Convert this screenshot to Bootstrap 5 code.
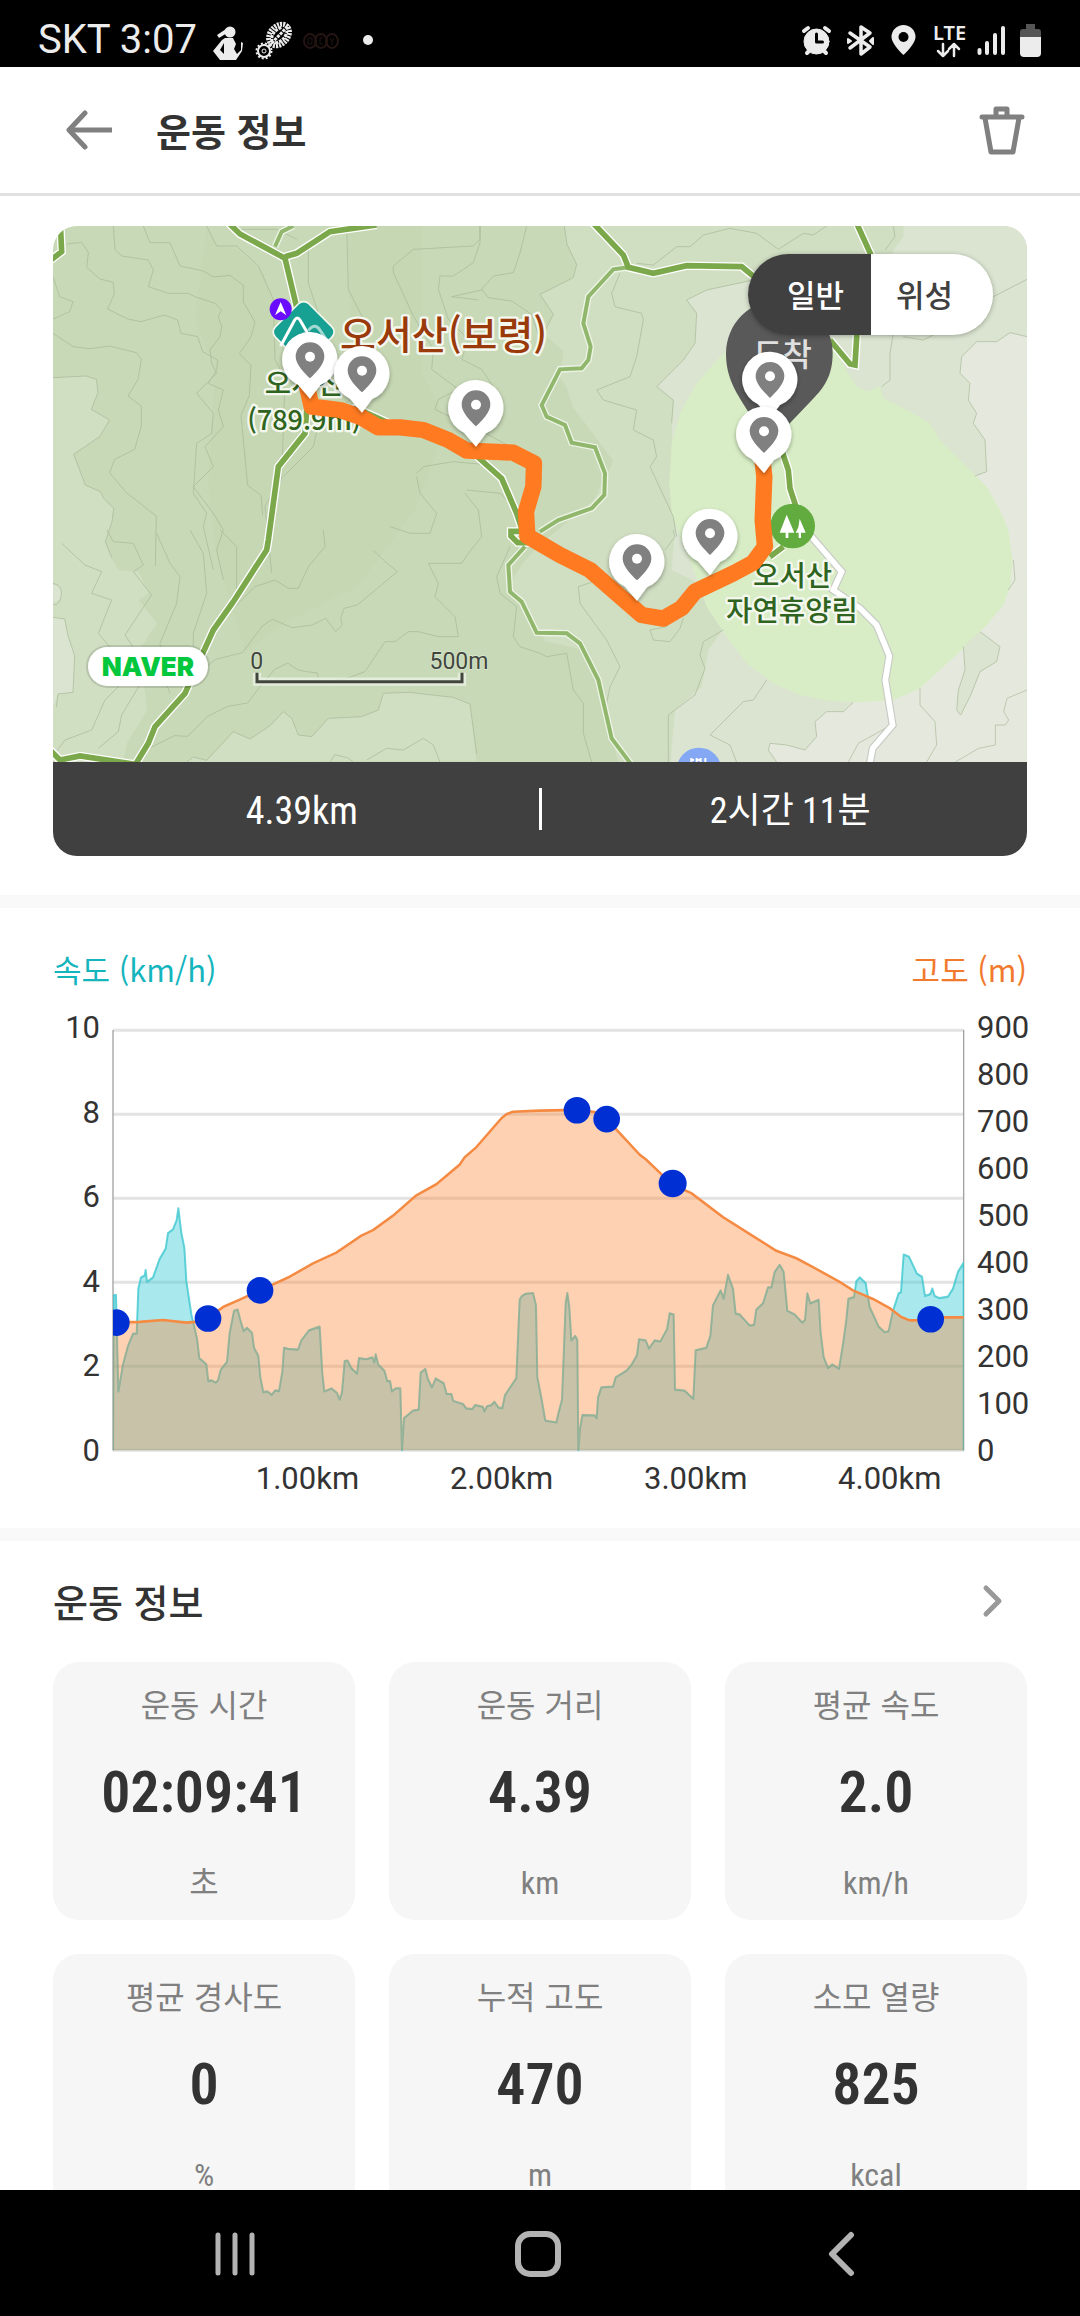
<!DOCTYPE html>
<html lang="ko">
<head>
<meta charset="utf-8">
<meta name="viewport" content="width=device-width, initial-scale=1">
<title>운동 정보</title>
<link href="https://cdn.jsdelivr.net/npm/bootstrap@5.3.0/dist/css/bootstrap.min.css" rel="stylesheet">
<style>
  :root { --side: 53px; --ink: #333; --soft: #808080; --dark: #404040; }
  body { font-family: "Noto Sans CJK KR", sans-serif; color: var(--ink); }
  svg { display: block; }
  .status { height: 67px; padding: 12px 38px 0 38px; font: 40px/56px Roboto, sans-serif; color: #ececec; }
  .notices { margin-left: 13px; }
  .appbar { height: 129px; padding: 0 55px 0 65px; border-bottom: 3px solid #e0e0e0; }
  .appbar h1 { font-size: 38px; line-height: 56px; font-weight: 700; margin-left: 43px; }
  .iconbtn { padding: 0; border: 0; line-height: 1; background: none; }
  .page { min-height: 0; overflow-y: auto; scrollbar-width: none; }
  .page::-webkit-scrollbar { display: none; }
  .mapcard { margin: 30px var(--side) 39px; border-radius: 24px; overflow: hidden; }
  .mapcard svg, .plot svg { width: 100%; height: auto; }
  .maptoggle { top: 28px; right: 34px; border-radius: 41px; box-shadow: 0 1px 5px rgba(0,0,0,.3); }
  .maptoggle .btn { width: 123px; height: 81px; border: 0; border-radius: 41px; background: #fff; color: var(--dark);
    font-size: 31px; line-height: 80px; font-weight: 500; padding: 0 14px 0 0; }
  .maptoggle .btn:first-of-type { padding: 0 0 0 12px; }
  .maptoggle .btn-check:checked + .btn { background: var(--dark); color: #fff; }
  .naver { left: 35px; bottom: 76px; width: 120px; height: 39px; border-radius: 20px; background: #fff; color: #03c73c;
    font: 900 26px/39px Inter, sans-serif; box-shadow: 0 0 0 2px rgba(0,0,0,.12); }
  .summary { height: 94px; background: var(--dark); color: #fff; font-size: 38px; line-height: 52px; }
  .summary .half { padding: 3px 0 0 12px; }
  .summary .hours { font-size: 36px; }
  .summary .rule { width: 3px; height: 42px; background: #fff; }
  .narrow { font-family: "Roboto Condensed", "Liberation Sans Narrow", "Noto Sans CJK KR", sans-serif; }
  .divide { height: 13px; background: #f9f9f9; }
  .chart { padding: 37px var(--side) 29px; }
  .legend2 { font-size: 31px; line-height: 48px; margin-bottom: 37px; }
  .cyan { color: #14b5bd; }
  .orange { color: #f27a2e; }
  .axes { font: 31px/40px Roboto, sans-serif; }
  .yaxis { margin: -22px 0 -20px; }
  .yl { width: 47px; margin-right: 13px; }
  .yr { width: 50px; margin-left: 13px; }
  .xaxis { margin: 8px 70px 0 60px; padding-left: 10%; }
  .xaxis span { width: 26%; flex-shrink: 0; }
  .info { padding: 32px var(--side) 34px; }
  .info h2 { font-size: 38px; line-height: 56px; font-weight: 500; }
  .info .iconbtn { margin-right: 24px; }
  .tiles { --bs-gutter-x: 34px; --bs-gutter-y: 34px; margin-top: -1px; }
  .tile { border-radius: 26px; background: #f6f6f6; padding: 17px 0 13px; text-align: center; }
  .tile dt, .tile .unit { font-size: 32px; line-height: 48px; font-weight: 400; color: var(--soft); }
  .tile .figure2 { font-size: 58px; line-height: 72px; font-weight: 600; margin: 29px 0 31px; }
  .softkeys { height: 126px; padding: 1px 88px 0 84px; }
</style>
</head>
<body class="vh-100 d-flex flex-column overflow-hidden bg-white">

<div class="status bg-black d-flex align-items-start flex-shrink-0">
  <span>SKT 3:07</span>
  <svg class="notices mt-2" width="176" height="44" viewBox="0 0 176 44">
    <g fill="#ececec" transform="translate(3 5)">
      <circle cx="17" cy="7" r="5.500"/>
      <path d="M13 4 4 10l2 3 8-5zM12 13h8l3 6-2 5 3 5 4-4 0-8 2 1-1 8-6 9H7L0 26l9-11zM7 25l4 4V18z" fill-rule="evenodd"/>
    </g>
    <g fill="none" stroke="#ececec">
      <ellipse cx="69" cy="15" rx="9" ry="12" transform="rotate(42 69 15)" stroke-width="5" stroke-dasharray="2 1"/>
      <path d="M59 26 79 5M62 22q-2-10 10-15m-7 16q10-2 12-12" stroke-width="3" stroke-dasharray="3 1"/>
      <circle cx="54" cy="31" r="6" stroke-width="2"/>
      <circle cx="54" cy="31" r="7.500" stroke-width="2" stroke-dasharray="2 2"/>
      <circle cx="54" cy="31" r="2"/>
    </g>
    <g fill="none" stroke="#241512" stroke-width="2">
      <ellipse cx="100" cy="21" rx="6" ry="7"/><ellipse cx="111" cy="21" rx="6" ry="7"/><ellipse cx="122" cy="21" rx="6" ry="7"/>
      <path d="M98 18h4v6h-4zM113 18h-3v6h3M120 18l2 3 2-3m-2 3v4" stroke-width="1"/>
    </g>
    <circle cx="158" cy="20" r="5" fill="#ececec"/>
  </svg>
  <svg class="ms-auto mt-2" width="242" height="44" viewBox="800 20 242 44">
    <g fill="#ececec" stroke="#ececec" stroke-linecap="round" stroke-linejoin="round">
      <circle cx="816.500" cy="41.500" r="12.500"/>
      <path d="m804 31 4-3m21 3-4-3M807 53l3-3m16 3-3-3" stroke-width="4"/>
      <path d="M816.500 34v8h6" fill="none" stroke="#000" stroke-width="3"/>
      <path d="m850 33 20 14-9 7V27l9 6-20 15" fill="none" stroke-width="3.500"/>
      <path d="m848 39 3 2-3 2zm25-1-3 3 3 3z" stroke-width="2"/>
      <path d="M903.500 55s-12-11-12-18a12 12 0 0 1 24 0c0 7-12 18-12 18z" stroke="none"/>
      <circle cx="903.500" cy="37" r="5" fill="#000" stroke="none"/>
      <path d="M943 44v12m-5-5 5 5 5-5M954 56V44m-5 5 5-5 5 5" fill="none" stroke-width="2.500"/>
      <path d="M979.500 50v3M987 43v10M995 35v18M1003 28v25" fill="none" stroke-width="4"/>
    </g>
    <text x="933" y="40" font-family="Noto Sans, sans-serif" font-weight="600" font-size="20" fill="#ececec">LTE</text>
    <path d="M1026 24h9v5h3a3 3 0 0 1 3 3v6h-21v-6a3 3 0 0 1 3-3h3z" fill="#555"/>
    <path d="M1020 37h21v16a4 4 0 0 1-4 4h-13a4 4 0 0 1-4-4z" fill="#ececec"/>
  </svg>
</div>

<header class="appbar d-flex align-items-center flex-shrink-0">
  <button class="iconbtn" type="button" aria-label="뒤로">
    <svg width="48" height="40" viewBox="0 0 48 40" fill="none" stroke="#808080" stroke-width="5"><path d="M20 3 4 20l16 17" stroke-linecap="round" stroke-linejoin="round"/><path d="M4 20h43"/></svg>
  </button>
  <h1 class="mb-0">운동 정보</h1>
  <button class="iconbtn ms-auto" type="button" aria-label="삭제">
    <svg width="46" height="52" viewBox="0 0 46 52" fill="none" stroke="#808080" stroke-width="5" stroke-linecap="round" stroke-linejoin="round"><path d="M3 13h40M17 12V5h11v7M6 14l6 34h22l6-34"/></svg>
  </button>
</header>

<main class="page flex-fill">
  <section class="mapcard">
    <div class="position-relative">
      <svg viewBox="39 48 2922 1608" role="img" aria-label="오서산 운동 경로 지도">
        <defs>
          <filter id="drop" x="-30%" y="-30%" width="160%" height="170%"><feDropShadow dx="0" dy="6" stdDeviation="7" flood-opacity=".35"/></filter>
          <g id="pin">
            <path d="M-36 74 0 116 30 76A83 83 0 1 0-36 74z" fill="#fff" filter="url(#drop)"/>
            <path d="M0 55C-15 40-43 14-43-10a43 43 0 0 1 86 0C43 14 15 40 0 55z" fill="#808080"/>
            <circle cy="-10" r="15" fill="#fff"/>
          </g>
        </defs>
        <path fill="#c8d9b7" d="M0 0h3000v1700H0z"/>
        <path fill="#c4d5b2" d="M500 48l30 60 60 10 80 70 40 120 5 160 0 0 20-140 200 60-10-180 0-160h220v440l80 150-100 260-170 230-220 110-120 90-90-310-20-200 20-340-60-150z" opacity=".6"/>
        <path fill="#d0dec2" d="M39 503l100-5 30 10 5 40-20 50 55 32-30 50-78 53 35 92 45 20 10 20 30 30-5 40-20 60 20 50 20 35 60 5 30 65-30 20 55 70-80 120 40 60 10 80-60 100-10 50-60 50H39zM440 1656l20-15 40 10 80-86 50 22 60-40 40-42 25 20 20 50 40 5 50-55 100-5 50-20 15-50 80-3 40 5 90 10 50 20 20 170z"/>
        <path fill="#d0dec2" d="M1573 48l8 55 29 60-10 40-100 50 40 60-30 60 60 50-10 80 20 30 20 60 60 80 60 80-60 120-160 130-55 60-40 70 50 50 60 110 130 30 30 110 20 90 40 132h1300V48z"/>
        <path fill="#dae4d0" d="M2140 210l-140 30-60 30 30 40-5 90-35 50-80 80 50 40-5 90 10 300-10 120 100 50 80 90-70 100-20 110-80 70-15 180h1100V48h-400l0 32-30 40-10 60z"/>
        <path fill="#e5e9dd" d="M2961 380l-51-12-40 27-60 0-45 45-5 50 30 30-5 50 25 40-10 30 35 50 5 95-35 13-400 600 35 79-30 28-50 0-35 30 5 45-35 40-55-15-50-5-5 20 25 36h750z"/>
        <path fill="#d8edc6" d="M2090 400L2040 440 1970 520 1920 610 1895 700 1888 820 1895 910 1920 980 1950 1050 2000 1190 2060 1280 2120 1360 2200 1420 2280 1455 2370 1473 2460 1477 2560 1470 2640 1435 2700 1380 2770 1315 2840 1245 2890 1185 2910 1130 2918 1050 2905 960 2880 900 2840 830 2800 790 2700 690 2670 640 2600 600 2530 565 2520 530 2480 545 2450 530 2425 490 2370 400z"/>
        <path fill="#dae4d0" d="M2820 1265L2880 1310 2870 1355 2820 1385 2790 1460 2762 1515 2750 1500 2755 1440 2775 1380 2770 1310z"/>
        <circle cx="39" cy="1150" r="26" fill="#dae4d0"/>
        <path fill="#dae4d0" d="M39 1222l35 5 10 50 20 60-5 110-45 5-15 40z"/>

        <g fill="none" stroke="#a3b594" stroke-width="2.500" stroke-linejoin="round" opacity=".75">
          <path d="M80 102l45-5 20 30-5 45 40 35 40 10 3 35-20 45 60 30 40 8 70-20 40 15 10 40 50 10 15 45 45 25-3 30-25 40 45 20-15 60 15 50-55 60 25 60-60 60 60 80 30 50-20 60 20 90"/>
          <path d="M39 200l20 60 40 15-10 30-50 22M39 370l60 40 50 6 60-8 80 20 15 20-10 60-30 50 40 30 0 60-20 70-60 30-15 40 50 60 90 70-3 150"/>
          <path d="M39 503l100-5 30 10 5 40-20 50 55 32-30 50-78 53 35 92 45 20 10 20 30 30-5 40-20 60 20 50"/>
          <path d="M220 48l5 70 20 20 80 12 15 30-15 50 60 20 60 0 20 10 60 20 20 20-10 20 10 30-5 30-30 40 5 40 15 30-60 60 50 60-5 60-45 30-10 150 40 60-10 40 30 130"/>
          <path d="M310 48l20 50 60 0 30 70 70 15 30 18 50-5 40 30 0 50 35 60-12 45-35 50 35 35-5 90-25 60 20 210 40 30 5 60"/>
          <path d="M500 48l30 60 60 0 65 60 45 100 5 180 30 60-10 300-50 80 20 200"/>
          <path d="M600 58l110 0 60 30M805 120l0 100 50 150 30 80M920 48l5 190 35 70 30 50"/>
          <path d="M1320 48l0 50-20 60-60 40-40 0-5 40 30 90 60 60-20 60 60 30 40 60-100 60 50 60 110 60 80 90-30 50"/>
          <path d="M1320 48l0 40-20 20-180 10-60 50 0 20 60 130 60 100-5 60 80 60-60 30-10 30 60 30"/>
          <path d="M1460 48l-20 80-20 60-60 10-35 40 20 25 70 10 60 40 20 60M1325 240l-90 20 80 10"/>
          <path d="M730 800l90-90 20-90 110-60M1130 790l20-20 90-15 110 10M1130 800l10 50 50 60-20 60-60 0-60-20"/>
          <path d="M1280 840l100 10 40 40M1275 850l40 50 10 80-40 50-20 30-100 0 30 60-10 40 60 60 10 60-60 0-60-15-30 0-40 30-30 0-60 90-60 22-80 10-2-28-40-5-20-5-30-20-40 20-50 60-30 40-60 10-60 30-60 60-40-2-80 40-60 60"/>
          <path d="M1000 1020l30 30 42 35-60 50-60 50-40 10-10 30 5 20-20 20-30-40-40 20-60 8-60-25-30 20-60 80-80 20-80 60M850 960l5 50-50 60-30 65-30 0-40-25-60 20-60 60"/>
          <path d="M440 1656l20-15 40 10 80-86 50 22 60-40 40-42 25 20 20 50 40 5 50-55 100-5 50-20 15-50 80-3 40 5 90 10 50 20 20 150M870 1656l15-22 40 10 15 12M980 1650l60-35 50 5 60-35 30 20 20 51"/>
          <path d="M65 1000l70 65 50 20-30 65 60 20-40 100 50 60 30 80-60 60-40 90-80 30-30 40M200 960l20 35 60 5 30 65-30 20 55 70-80 120 40 60 10 80-60 100-10 50-60 50M350 970l40 90 30 40-10 80-50 120 10 100 20 50M450 960l40 70 10 120-40 120 0 40M540 960l50 50 0 160"/>
          <path d="M39 1120q28 5 25 35t-25 30M39 1222l35 5 10 50 20 60-5 110-45 5-5 40"/>
          <path d="M1573 48l8 55 29 60-10 40-100 50 40 60-30 60M1740 190l-25 60 10 40 80 20 5 20-20 110-20 60-100 40 20 30 100 30-10 60 60 30 10 50-20 30 70 150 10 60"/>
          <path d="M2140 210l-140 30-60 30 30 40-5 90-35 50-80 80 50 40-5 70M1790 160l50 5 70-55 40 0 40-35 80-20 80 15 65 48 75-48 30 5 40-27M2560 48l5 32-30 40M2560 370l-10 60 0 80-25 20M2590 380l60 10 50-25M2860 260l101-52"/>
          <path d="M2961 380l-51-12-40 27-60 0-45 45-5 50 30 30-5 50 25 40-10 30 35 50 5 95-35 13M2920 1050l5 60-20 30M2820 1265l60 45-10 45-50 30-30 75-28 55-12-15 5-60 20-60-5-70M2961 1440l-60 25-10 40 15 25-10 15-30 0 0 60-50 10-70 41"/>
          <path d="M1900 960l5 20-30 40M1615 1130l90-30M1615 1130l5 50 80 110 40 80-30 60-10 50M1960 1190l-60 30-20 30-50 10 10 30 50 5 30-40 10-30M2050 1260l-60 35-10 40 15 40-30 80-80 60 0 60 0 90M2180 1410l-40 60-30 5-100 100 60 30 20 52M1500 1330l20 10 60-10 20 110 30 40 0 90 25 86M1410 1010l-40 90 10 50 50 40-10 90 20 30 60 20M2440 1477l-30 28-50 0-35 30 5 45-35 40-55-15-50-5-5 20 25 36M2545 1550l-90 50-30 56M2640 1435l0 50 45 50 5 70-30 51"/>
        </g>

        <g fill="none" stroke-linejoin="miter">
          <g stroke="#fff" stroke-width="25">
            <path d="M565 38L600 72 735 145 772 300M735 140L770 130 870 65 1010 45M62 60L65 125 30 152M800 600L795 670 715 770 685 990 680 1020 580 1175 520 1260 470 1370 435 1450 345 1550 325 1600 285 1665M30 1620L60 1650 120 1638 280 1662M1290 720L1385 805 1430 910 1450 970M1480 964L1413 964 1413 978 1433 998 1480 998M960 600L1060 645 1120 650"/>
            <path d="M1660 40L1750 135 1765 172 1840 190 1940 167 2105 170 2160 215M2370 390L2430 462 2445 465 2452 350M2450 40L2500 150M2225 720L2245 780 2250 835 2268 890M2230 1010L2190 1040"/>
          </g>
          <path stroke="#edf4e6" stroke-width="20" d="M705 110L725 65 760 48M1455 1010L1405 1065 1410 1145 1445 1175 1490 1268 1580 1270 1620 1300 1675 1410 1715 1585 1775 1665M1765 172L1720 178 1645 260 1630 340 1652 410 1645 450 1625 475 1560 478 1505 585 1520 620 1575 645 1595 698 1665 712 1695 790 1693 855 1655 895 1555 930 1500 965"/>
          <path stroke="#90b76c" stroke-width="12" d="M705 110L725 65 760 48M1455 1010L1405 1065 1410 1145 1445 1175 1490 1268 1580 1270 1620 1300 1675 1410 1715 1585 1775 1665M1765 172L1720 178 1645 260 1630 340 1652 410 1645 450 1625 475 1560 478 1505 585 1520 620 1575 645 1595 698 1665 712 1695 790 1693 855 1655 895 1555 930 1500 965"/>
          <g stroke="#7ba84a" stroke-width="17">
            <path d="M565 38L600 72 735 145 772 300M735 140L770 130 870 65 1010 45M62 60L65 125 30 152M800 600L795 670 715 770 685 990 680 1020 580 1175 520 1260 470 1370 435 1450 345 1550 325 1600 285 1665M30 1620L60 1650 120 1638 280 1662M1290 720L1385 805 1430 910 1450 970M1480 964L1413 964 1413 978 1433 998 1480 998M960 600L1060 645 1120 650"/>
            <path d="M1660 40L1750 135 1765 172 1840 190 1940 167 2105 170 2160 215M2370 390L2430 462 2445 465 2452 350M2450 40L2500 150M2225 720L2245 780 2250 835 2268 890M2230 1010L2190 1040"/>
          </g>
          <path stroke="#c9cbc6" stroke-width="24" d="M2310 975L2405 1085 2380 1140 2460 1195 2510 1245 2548 1338 2536 1410 2558 1545 2498 1615 2488 1670"/>
          <path stroke="#fff" stroke-width="17" d="M2310 975L2405 1085 2380 1140 2460 1195 2510 1245 2548 1338 2536 1410 2558 1545 2498 1615 2488 1670"/>
        </g>

        <g font-family="Noto Sans CJK KR, sans-serif" font-weight="500" stroke="#f4f8ef" stroke-width="14" stroke-linejoin="round" paint-order="stroke">
          <text x="900" y="418" font-size="117" fill="#9a3a0a">오서산(보령)</text>
          <g font-size="86" fill="#2f6420" text-anchor="middle">
            <text x="793" y="552">오서산</text>
            <text x="793" y="660" font-size="81">(789.9m)</text>
            <text x="2258" y="1128">오서산</text>
            <text x="2256" y="1234">자연휴양림</text>
          </g>
        </g>
        <rect x="720" y="295" width="142" height="142" rx="22" transform="rotate(45 791 366)" fill="#17a193" stroke="#f4f8ef" stroke-width="5"/>
        <path d="M722 408l42-78q8-12 16 0l45 78" fill="none" stroke="#fff" stroke-width="9"/>
        <path d="M805 362q20-26 36 0l16 24" fill="none" stroke="#a3d9d3" stroke-width="9"/>
        <circle cx="722" cy="298" r="33" fill="#6a0cff"/><path d="M722 276l17 40-17-12-17 12z" fill="#fff"/>
        <circle cx="2258" cy="948" r="67" fill="#62ab3f"/>
        <path d="M2240 914l23 54h-18v16h-8v-16h-18zM2279 926l18 42h-14v16h-7v-16h-9l8-16z" fill="#fff"/>
        <circle cx="1977" cy="1680" r="67" fill="#85a8f5"/>
        <path d="M1954 1644v12M1962 1650h-6M1970 1644v12m0-6h12m0-6v12m14-12v12" stroke="#fff" stroke-width="6" fill="none"/>
        <path fill="none" stroke="#ff7a20" stroke-width="49" stroke-linejoin="round" d="M800 525L815 590 900 600 960 620 1015 652 1080 652 1150 660 1225 690 1280 722 1420 728 1482 760 1480 830 1458 905 1462 978 1500 1000 1560 1035 1650 1080 1730 1150 1805 1215 1870 1226 1925 1194 1965 1145 2080 1090 2140 1058 2175 1010 2168 930 2173 800 2165 730"/>
        <path d="M2160 662l-50-80C2085 540 2058 500 2058 430a160 160 0 0 1 320 0c0 70-28 105-60 138l-100 105z" fill="#595959"/>
        <text x="2228" y="467" font-family="Noto Sans CJK KR, sans-serif" font-size="95" font-weight="500" fill="#e0e0e0" text-anchor="middle">도착</text>
        <use href="#pin" x="810" y="450"/><use href="#pin" x="966" y="492"/><use href="#pin" x="1308" y="594"/>
        <use href="#pin" x="2010" y="980"/><use href="#pin" x="1791" y="1056"/><use href="#pin" x="2190" y="509"/><use href="#pin" x="2172" y="674"/>
        <path d="M651 1388v27h615v-27" fill="none" stroke="#eef3e8" stroke-opacity=".75" stroke-width="25"/>
        <path d="M651 1388v27h615v-27" fill="none" stroke="#40463c" stroke-width="9"/>
        <g font-family="Roboto, sans-serif" font-size="69" fill="#40463c" text-anchor="middle" stroke="#dfe8d5" stroke-width="4" paint-order="stroke">
          <text x="650" y="1378">0</text><text x="1257" y="1378">500m</text>
        </g>
      </svg>
      <a class="naver position-absolute text-center text-decoration-none" href="#">NAVER</a>
      <div class="maptoggle btn-group position-absolute" role="group" aria-label="지도 종류">
        <input class="btn-check" type="radio" name="maptype" id="m1" checked><label class="btn" for="m1">일반</label>
        <input class="btn-check" type="radio" name="maptype" id="m2"><label class="btn" for="m2">위성</label>
      </div>
    </div>
    <div class="summary d-flex align-items-center text-center">
      <div class="half flex-fill w-50 narrow">4.39km</div>
      <div class="rule flex-shrink-0"></div>
      <div class="half hours flex-fill w-50 narrow">2시간 11분</div>
    </div>
  </section>

  <div class="divide"></div>

  <section class="chart">
    <div class="legend2 d-flex justify-content-between"><span class="cyan">속도 (km/h)</span><span class="orange">고도 (m)</span></div>
    <div class="axes">
      <div class="d-flex">
        <div class="yaxis yl d-flex flex-column justify-content-between text-end"><span>10</span><span>8</span><span>6</span><span>4</span><span>2</span><span>0</span></div>
        <div class="plot flex-fill">
          <svg viewBox="220 301 2553 1262" overflow="visible" role="img" aria-label="속도와 고도 그래프">
            <clipPath id="inplot"><path d="M220 200h2553v1210H220z"/></clipPath>
            <g transform="scale(1 1.11)">
            <path d="M220 272h2553M220 499h2553M220 726h2553M220 953h2553M220 1180h2553M220 1407h2553" stroke="#e3e3e3" stroke-width="8"/>
            <path d="M220 271v1137M2772 271v1137" stroke="#a2a2a2" stroke-width="4"/>
            <g clip-path="url(#inplot)" stroke-linejoin="round">
              <path fill="rgba(50,202,214,.42)" stroke="#35c4cc" stroke-opacity=".75" stroke-width="6" d="M220 1407L222 988 229 988 232 1100 236 1248 250 1175 265 1125 280 1092 291 1092 296 970 304 940 315 935 318 920 322 952 340 940 360 890 378 862 385 820 400 810 411 785 416 753 425 820 434 860 440 950 455 1040 472 1105 479 1158 500 1175 506 1220 515 1218 528 1224 535 1218 543 1190 562 1168 570 1090 583 1030 594 1027 602 1055 612 1085 622 1076 637 1090 643 1130 656 1152 662 1210 671 1250 683 1248 696 1257 707 1245 718 1247 728 1195 733 1130 745 1133 775 1135 785 1110 808 1083 840 1073 848 1200 854 1248 875 1240 892 1252 900 1270 907 1250 915 1166 924 1165 935 1185 952 1200 958 1158 980 1161 998 1156 1004 1170 1008 1148 1016 1176 1034 1192 1043 1220 1051 1220 1057 1248 1068 1240 1082 1240 1087 1407 1093 1320 1120 1300 1137 1297 1143 1197 1157 1187 1165 1215 1177 1237 1188 1213 1212 1226 1221 1255 1235 1255 1241 1274 1270 1282 1280 1294 1297 1296 1307 1285 1330 1290 1334 1302 1342 1288 1355 1285 1364 1276 1377 1292 1388 1293 1396 1258 1430 1212 1440 1000 1447 990 1458 984 1480 982 1489 1015 1493 1210 1505 1265 1517 1327 1550 1332 1556 1308 1567 1270 1578 1010 1583 982 1589 1020 1595 1110 1607 1098 1613 1110 1616 1407 1621 1350 1628 1312 1665 1313 1671 1320 1675 1265 1685 1237 1720 1235 1728 1210 1760 1192 1775 1177 1792 1150 1798 1107 1818 1110 1828 1132 1845 1110 1862 1113 1882 1080 1890 1037 1902 1040 1906 1243 1935 1246 1961 1268 1968 1137 2000 1130 2012 1098 2020 1015 2043 975 2052 997 2065 933 2080 970 2088 1038 2100 1040 2130 1070 2143 1068 2150 1027 2170 1010 2185 967 2195 967 2205 925 2220 906 2232 925 2243 1030 2265 1040 2288 1062 2296 1055 2303 983 2312 1010 2337 1000 2343 1090 2352 1155 2365 1185 2378 1175 2398 1187 2410 1120 2420 1055 2426 998 2443 993 2450 950 2460 940 2478 955 2490 1020 2517 1073 2535 1088 2547 1085 2560 1030 2577 983 2584 980 2592 878 2608 884 2632 930 2647 938 2656 990 2672 985 2678 970 2685 990 2700 996 2725 992 2740 970 2755 925 2772 900V1407"/>
              <path fill="rgba(255,122,38,.35)" d="M220 1407V1062L300 1060 370 1055 440 1062 465 1060 505 1050 550 1020 600 1000 661 975 750 938 820 902 890 873 965 827 1000 812 1060 773 1130 718 1190 688 1260 635 1275 615 1310 588 1385 510 1400 499 1420 492 1500 489 1612 487 1665 493 1701 512 1730 540 1800 608 1820 622 1870 665 1900 690 1955 712 2050 777 2120 817 2210 868 2270 888 2320 912 2400 952 2440 975 2500 998 2550 1023 2585 1047 2610 1056 2673 1055 2710 1048 2772 1048V1407z"/>
              <path fill="none" stroke="#f58a42" stroke-width="7" d="M220 1062L300 1060 370 1055 440 1062 465 1060 505 1050 550 1020 600 1000 661 975 750 938 820 902 890 873 965 827 1000 812 1060 773 1130 718 1190 688 1260 635 1275 615 1310 588 1385 510 1400 499 1420 492 1500 489 1612 487 1665 493 1701 512 1730 540 1800 608 1820 622 1870 665 1900 690 1955 712 2050 777 2120 817 2210 868 2270 888 2320 912 2400 952 2440 975 2500 998 2550 1023 2585 1047 2610 1056 2673 1055 2710 1048 2772 1048"/>
              <g fill="#0030d4"><ellipse cx="230" cy="1062" rx="40" ry="36"/><ellipse cx="505" cy="1051" rx="40" ry="36"/><ellipse cx="661" cy="975" rx="40" ry="36"/><ellipse cx="1612" cy="488" rx="40" ry="36"/><ellipse cx="1701" cy="512" rx="40" ry="36"/><ellipse cx="1899" cy="686" rx="42" ry="37"/><ellipse cx="2673" cy="1053" rx="40" ry="36"/></g>
            </g>
            </g>
          </svg>
        </div>
        <div class="yaxis yr d-flex flex-column justify-content-between"><span>900</span><span>800</span><span>700</span><span>600</span><span>500</span><span>400</span><span>300</span><span>200</span><span>100</span><span>0</span></div>
      </div>
      <div class="xaxis d-flex text-center"><span>1.00km</span><span>2.00km</span><span>3.00km</span><span>4.00km</span></div>
    </div>
  </section>

  <div class="divide"></div>

  <section class="info">
    <div class="d-flex align-items-center justify-content-between">
      <h2 class="mb-0">운동 정보</h2>
      <button class="iconbtn" type="button" aria-label="운동 정보 더보기"><svg width="21" height="34" viewBox="0 0 21 34" fill="none" stroke="#999" stroke-width="5" stroke-linejoin="round" stroke-linecap="round"><path d="M4 4l13 13L4 30"/></svg></button>
    </div>
    <dl class="tiles row mb-0">
      <div class="col-4"><div class="tile"><dt>운동 시간</dt><dd class="figure2 narrow">02:09:41</dd><dd class="unit narrow mb-0">초</dd></div></div>
      <div class="col-4"><div class="tile"><dt>운동 거리</dt><dd class="figure2 narrow">4.39</dd><dd class="unit narrow mb-0">km</dd></div></div>
      <div class="col-4"><div class="tile"><dt>평균 속도</dt><dd class="figure2 narrow">2.0</dd><dd class="unit narrow mb-0">km/h</dd></div></div>
      <div class="col-4"><div class="tile"><dt>평균 경사도</dt><dd class="figure2 narrow">0</dd><dd class="unit narrow mb-0">%</dd></div></div>
      <div class="col-4"><div class="tile"><dt>누적 고도</dt><dd class="figure2 narrow">470</dd><dd class="unit narrow mb-0">m</dd></div></div>
      <div class="col-4"><div class="tile"><dt>소모 열량</dt><dd class="figure2 narrow">825</dd><dd class="unit narrow mb-0">kcal</dd></div></div>
    </dl>
  </section>
</main>

<nav class="softkeys bg-black row g-0 align-items-center flex-shrink-0" aria-label="시스템">
  <div class="col-4 d-flex justify-content-center"><button class="iconbtn" type="button" aria-label="최근 앱"><svg width="42" height="46" viewBox="0 0 42 46" stroke="#b3b3b3" stroke-width="5" stroke-linecap="round"><path d="M4 4v38M21 4v38M38 4v38"/></svg></button></div>
  <div class="col-4 d-flex justify-content-center"><button class="iconbtn" type="button" aria-label="홈"><svg width="48" height="48" viewBox="0 0 48 48" fill="none" stroke="#b3b3b3" stroke-width="6"><rect x="4" y="4" width="40" height="40" rx="12"/></svg></button></div>
  <div class="col-4 d-flex justify-content-center"><button class="iconbtn" type="button" aria-label="뒤로 가기"><svg width="28" height="46" viewBox="0 0 28 46" fill="none" stroke="#b3b3b3" stroke-width="6" stroke-linecap="round" stroke-linejoin="round"><path d="M24 4 5 23l19 19"/></svg></button></div>
</nav>

<script src="https://cdn.jsdelivr.net/npm/bootstrap@5.3.0/dist/js/bootstrap.bundle.min.js"></script>
</body>
</html>
